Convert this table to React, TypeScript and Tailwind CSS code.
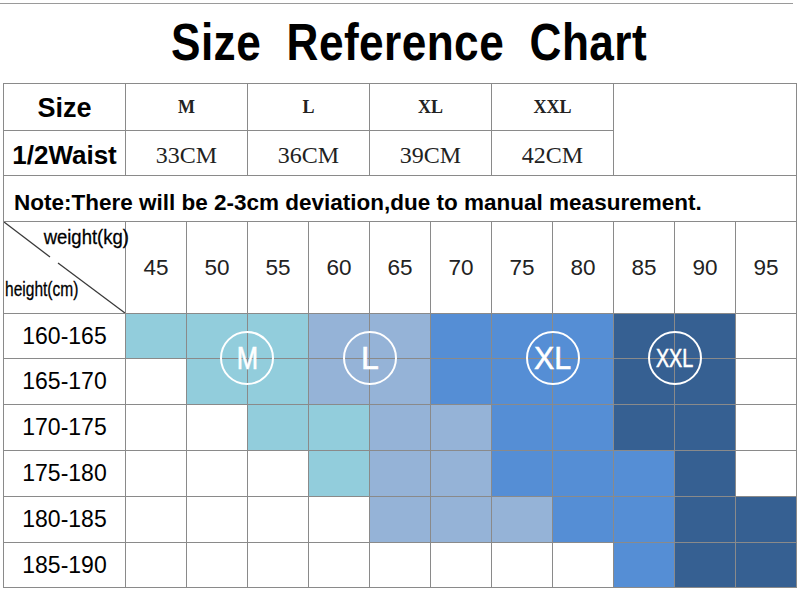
import React from 'react'

const fills: Record<string, string> = {
  m: 'bg-[#92cddc]',
  l: 'bg-[#95b3d7]',
  xl: 'bg-[#558ed5]',
  xxl: 'bg-[#366092]',
  w: 'bg-white',
}

const sizes = [
  { name: 'M', waist: '33CM' },
  { name: 'L', waist: '36CM' },
  { name: 'XL', waist: '39CM' },
  { name: 'XXL', waist: '42CM' },
]

const weights = ['45', '50', '55', '60', '65', '70', '75', '80', '85', '90', '95']

const rows: [string, string][] = [
  ['160-165', 'm m m l l xl xl xl xxl xxl w'],
  ['165-170', 'w m m l l xl xl xl xxl xxl w'],
  ['170-175', 'w w m m l l xl xl xxl xxl w'],
  ['175-180', 'w w w m l l xl xl xl xxl w'],
  ['180-185', 'w w w w l l l xl xl xxl xxl'],
  ['185-190', 'w w w w w w w w xl xxl xxl'],
]

// circle badges sit on the grid line crossings
const badges = [
  { label: 'M', left: 'left-[217px]', text: 'text-[32px] scale-x-[0.8]' },
  { label: 'L', left: 'left-[340px]', text: 'text-[32px]' },
  { label: 'XL', left: 'left-[523px]', text: 'text-[32px] scale-x-[0.95]' },
  { label: 'XXL', left: 'left-[645px]', text: 'text-[26px] scale-x-[0.76]' },
]

function Badge({ label, left, text }: { label: string; left: string; text: string }) {
  return (
    <div
      className={`absolute top-[248px] ${left} w-[54px] h-[54px] rounded-full border-[2.5px] border-white flex items-center justify-center`}
    >
      <span className={`inline-block leading-none text-white [-webkit-text-stroke:0.6px_white] ${text}`}>{label}</span>
    </div>
  )
}

export default function App() {
  return (
    <div className="w-[800px] h-[591px] bg-white overflow-hidden font-['Liberation_Sans',Arial,sans-serif] text-black">
      <div className="mt-[3px] h-px w-[793px] bg-[#9a9a9a]" />

      {/* Title */}
      <div className="h-[79px] flex justify-center pt-[12px] pl-[18px]">
        <h1 className="inline-block whitespace-pre text-[52px] leading-[52px] font-bold scale-x-[0.85] tracking-[0.5px]">
          {'Size  Reference  Chart'}
        </h1>
      </div>

      <div className="relative ml-[3px] w-[794px]">
        <div className="grid w-[794px] grid-cols-[121px_repeat(11,60px)] grid-rows-[46px_44px_45px_91px_44px_45px_45px_45px_45px_44px] gap-px bg-[#8a8a8a] border border-[#8a8a8a]">
          {/* Size row */}
          <div className="bg-white flex items-center justify-center text-[27px] font-bold pt-[2px]">Size</div>
          {sizes.map((s) => (
            <div
              key={s.name}
              className="col-span-2 bg-white flex items-center justify-center font-['Liberation_Serif','Times_New_Roman',serif] font-bold text-[18px] text-[#222]"
            >
              {s.name}
            </div>
          ))}
          <div className="col-span-3 row-span-2 bg-white" />

          {/* Waist row */}
          <div className="bg-white flex items-center justify-center text-[26px] font-bold pt-[4px]">1/2Waist</div>
          {sizes.map((s) => (
            <div
              key={s.waist}
              className="col-span-2 bg-white flex items-center justify-center pt-[3px] font-['Liberation_Serif','Times_New_Roman',serif] text-[24px] text-[#222]"
            >
              {s.waist}
            </div>
          ))}

          {/* Note */}
          <div className="col-span-12 bg-white flex items-center pl-[10px] pt-[8px] text-[22.5px] font-bold whitespace-nowrap">
            Note:There will be 2-3cm deviation,due to manual measurement.
          </div>

          {/* Weight header */}
          <div className="relative bg-white">
            <svg className="absolute inset-0" width="121" height="91" viewBox="0 0 121 91">
              <line x1="0" y1="0" x2="46" y2="35" stroke="#3a3a3a" strokeWidth="1.3" />
              <line x1="54" y1="41" x2="121" y2="91" stroke="#3a3a3a" strokeWidth="1.3" />
            </svg>
            <span className="absolute right-[-4px] top-[3px] inline-block origin-right scale-x-[0.88] text-[21px] leading-[24px] [-webkit-text-stroke:0.3px_black]">
              weight(kg)
            </span>
            <span className="absolute left-[1px] bottom-[12px] inline-block origin-left scale-x-[0.74] text-[21px] leading-[24px] [-webkit-text-stroke:0.3px_black]">
              height(cm)
            </span>
          </div>
          {weights.map((w) => (
            <div key={w} className="bg-white flex items-center justify-center text-[22.5px] text-[#222]">
              {w}
            </div>
          ))}

          {/* Height rows */}
          {rows.map(([height, pattern]) => (
            <React.Fragment key={height}>
              <div className="bg-white flex items-center justify-center text-[23px]">{height}</div>
              {pattern.split(' ').map((f, i) => (
                <div key={i} className={fills[f]} />
              ))}
            </React.Fragment>
          ))}
        </div>

        {badges.map((b) => (
          <Badge key={b.label} {...b} />
        ))}
      </div>
    </div>
  )
}
